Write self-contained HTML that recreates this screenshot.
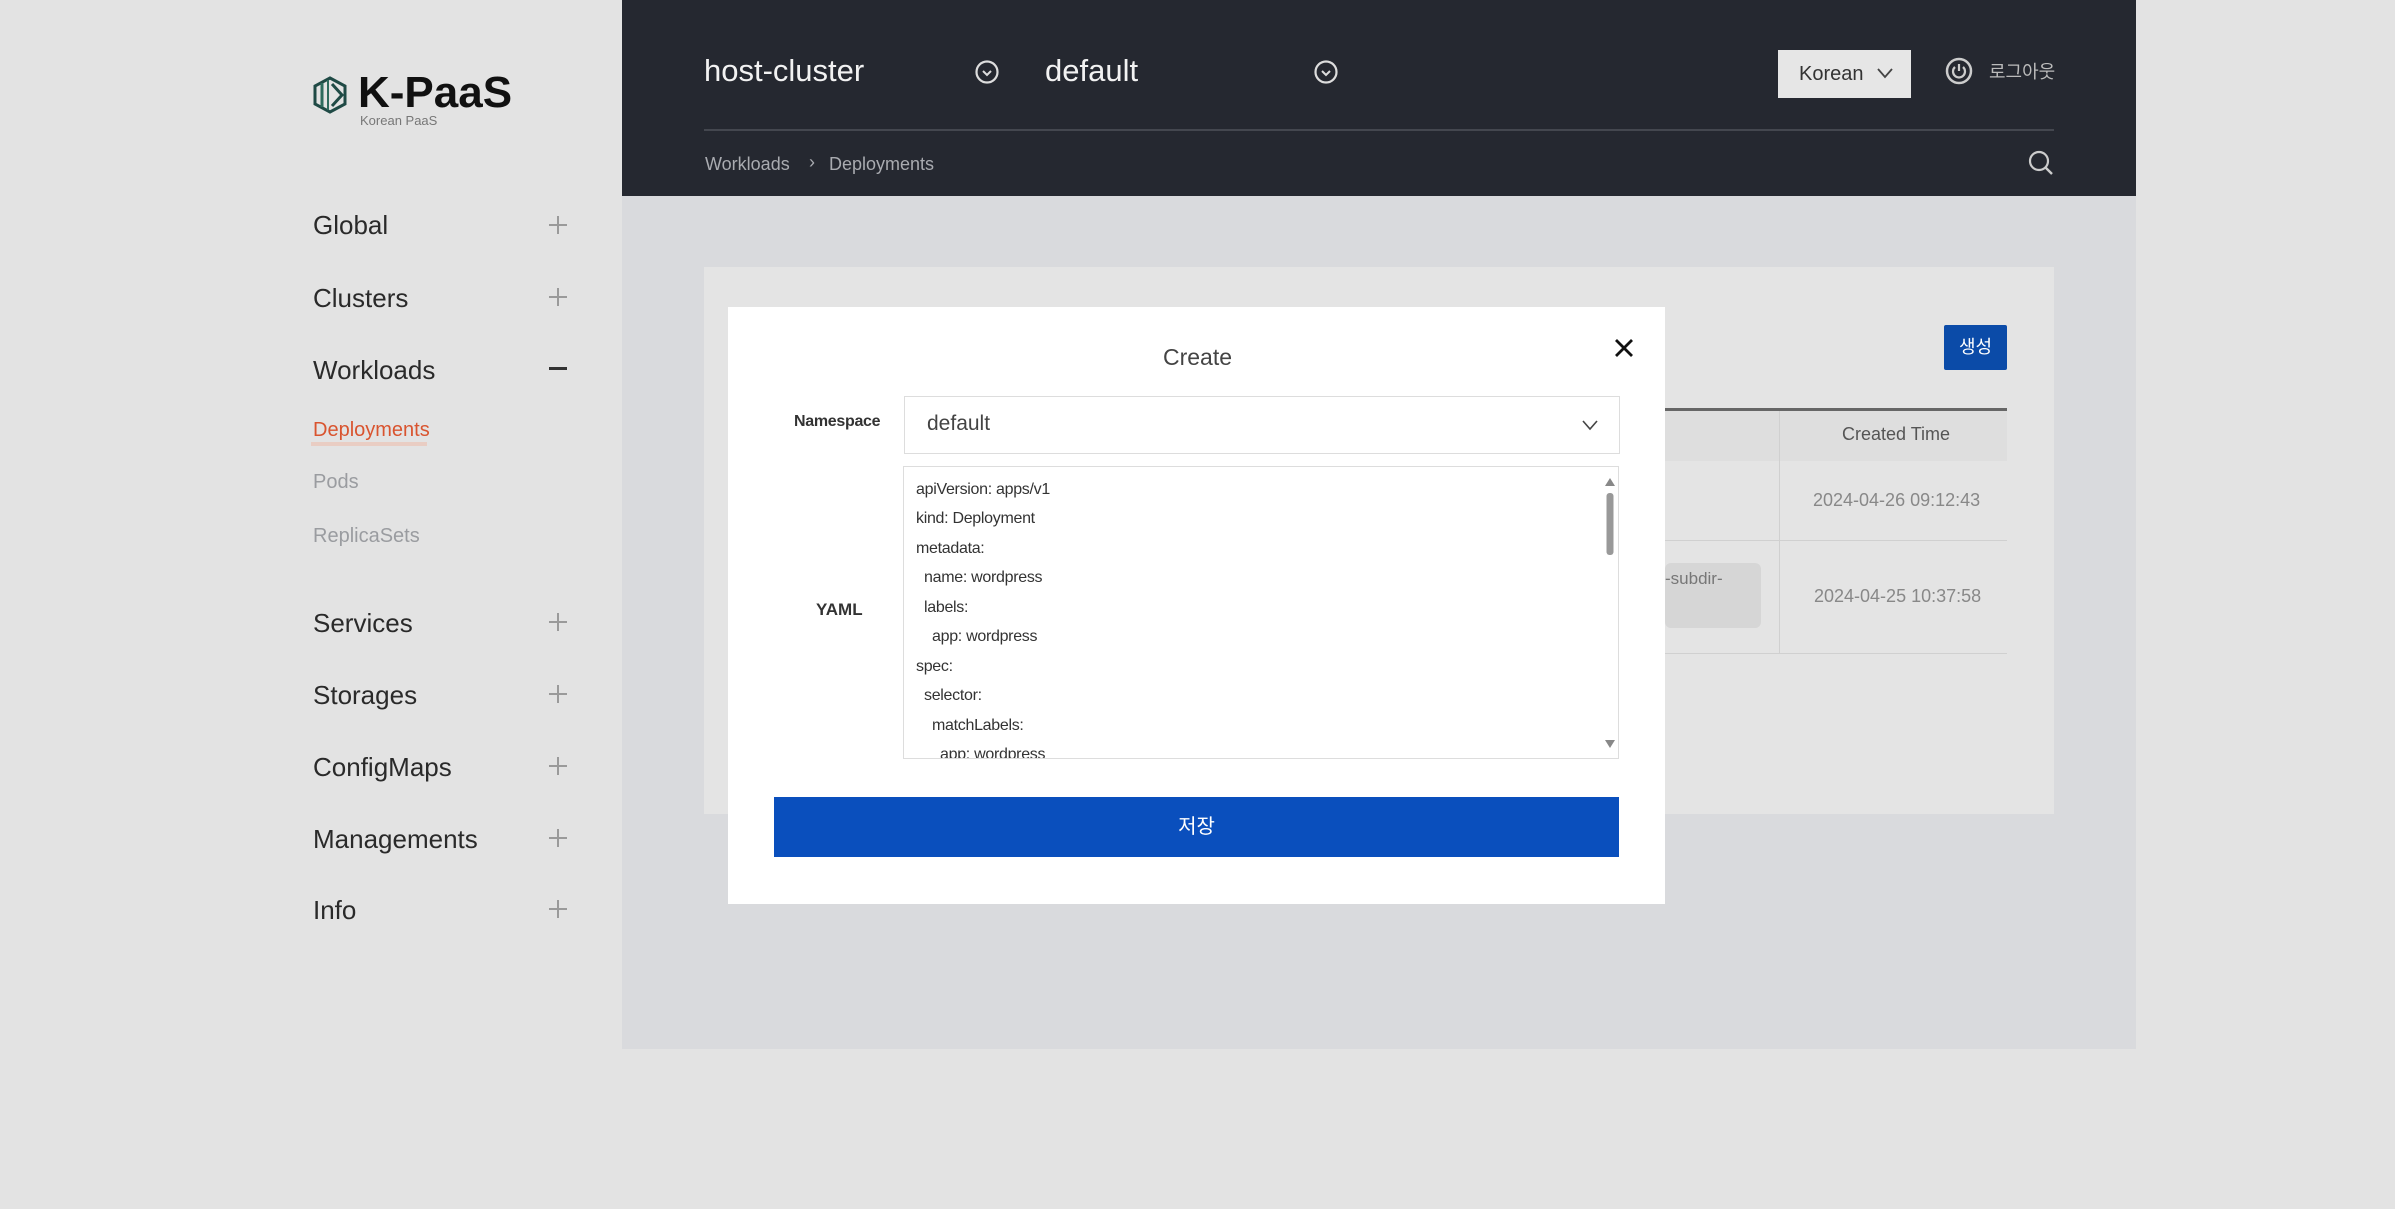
<!DOCTYPE html>
<html><head><meta charset="utf-8"><style>
*{margin:0;padding:0;box-sizing:border-box}
body{width:2395px;height:1209px;background:#e3e3e3;font-family:"Liberation Sans","Noto Sans CJK KR",sans-serif;position:relative;overflow:hidden}
.a{position:absolute;white-space:nowrap}
.nav{font-size:26px;color:#2a2a2a;left:313px}
.plus{left:549px;width:20px;height:20px}
.plus:before,.plus:after{content:"";position:absolute;background:#9a9a9a}
.plus:before{left:0;top:9px;width:18px;height:2px}
.plus:after{left:8px;top:1px;width:2px;height:18px}
.sub{left:313px;font-size:20px;color:#9a9ca0}
.y{position:absolute;left:916px;font-size:16px;color:#333;letter-spacing:-0.3px}
</style></head><body>
<div class="a" style="left:0;top:0;width:622px;height:1209px;background:#e3e3e3"></div>
<svg class="a" style="left:312px;top:76px" width="36" height="38" viewBox="0 0 36 38"><polygon points="18,2 33,10 33,28 18,36 3,28 3,10" fill="none" stroke="#1f4a45" stroke-width="3"/><line x1="10" y1="7" x2="10" y2="31" stroke="#2e6b5e" stroke-width="3"/><line x1="16" y1="4" x2="16" y2="34" stroke="#2e6b5e" stroke-width="2"/><polyline points="20,8 30,19 20,30" fill="none" stroke="#1f4a45" stroke-width="3"/></svg>
<div class="a" style="left:358px;top:68px;font-size:44px;font-weight:bold;color:#111">K-PaaS</div>
<div class="a" style="left:360px;top:113px;font-size:13px;color:#777">Korean PaaS</div>
<div class="a nav" style="top:210px">Global</div><div class="a plus" style="top:215px"></div>
<div class="a nav" style="top:283px">Clusters</div><div class="a plus" style="top:287px"></div>
<div class="a nav" style="top:355px">Workloads</div><div class="a" style="left:549px;top:367px;width:18px;height:3px;background:#333"></div>
<div class="a sub" style="top:419px;color:#d9542f">Deployments</div><div class="a" style="left:311px;top:442px;width:116px;height:4px;background:#e9cdc3"></div>
<div class="a sub" style="top:471px">Pods</div>
<div class="a sub" style="top:525px">ReplicaSets</div>
<div class="a nav" style="top:608px">Services</div><div class="a plus" style="top:612px"></div>
<div class="a nav" style="top:680px">Storages</div><div class="a plus" style="top:684px"></div>
<div class="a nav" style="top:752px">ConfigMaps</div><div class="a plus" style="top:756px"></div>
<div class="a nav" style="top:824px">Managements</div><div class="a plus" style="top:828px"></div>
<div class="a nav" style="top:895px">Info</div><div class="a plus" style="top:899px"></div>
<div class="a" style="left:622px;top:0;width:1514px;height:1049px;background:#d9dadd"></div>
<div class="a" style="left:622px;top:0;width:1514px;height:196px;background:#252830"></div>
<div class="a" style="left:704px;top:53px;font-size:31px;color:#f2f2f2">host-cluster</div>
<svg class="a" style="left:974px;top:59px" width="26" height="26"><circle cx="13" cy="13" r="10.5" fill="none" stroke="#ddd" stroke-width="2.2"/><polyline points="9,12 13,16 17,12" fill="none" stroke="#ddd" stroke-width="2"/></svg>
<div class="a" style="left:1045px;top:53px;font-size:31px;color:#f2f2f2">default</div>
<svg class="a" style="left:1313px;top:59px" width="26" height="26"><circle cx="13" cy="13" r="10.5" fill="none" stroke="#ddd" stroke-width="2.2"/><polyline points="9,12 13,16 17,12" fill="none" stroke="#ddd" stroke-width="2"/></svg>
<div class="a" style="left:1778px;top:50px;width:133px;height:48px;background:#e6e6e6;font-size:20px;color:#333;padding:13px 0 0 21px">Korean</div>
<svg class="a" style="left:1876px;top:66px" width="18" height="14"><polyline points="2,3 9,11 16,3" fill="none" stroke="#444" stroke-width="1.8"/></svg>
<svg class="a" style="left:1944px;top:56px" width="30" height="30"><circle cx="15" cy="15" r="12" fill="none" stroke="#ccc" stroke-width="2.5"/><path d="M11 11 A6 6 0 1 0 19 11" fill="none" stroke="#ccc" stroke-width="2.2"/><line x1="15" y1="8" x2="15" y2="15" stroke="#ccc" stroke-width="2.2"/></svg>
<div class="a" style="left:1989px;top:58px;font-size:18px;color:#bbb">로그아웃</div>
<div class="a" style="left:704px;top:129px;width:1350px;height:2px;background:#44474f"></div>
<div class="a" style="left:705px;top:154px;font-size:18px;color:#a9abb0">Workloads</div>
<div class="a" style="left:809px;top:152px;font-size:18px;color:#a9abb0">›</div>
<div class="a" style="left:829px;top:154px;font-size:18px;color:#a9abb0">Deployments</div>
<svg class="a" style="left:2027px;top:149px" width="28" height="28"><circle cx="12" cy="12" r="9" fill="none" stroke="#ccc" stroke-width="2.2"/><line x1="18.5" y1="18.5" x2="25" y2="25" stroke="#ccc" stroke-width="2.4"/></svg>
<div class="a" style="left:704px;top:267px;width:1350px;height:547px;background:#e4e4e4"></div>
<div class="a" style="left:1944px;top:325px;width:63px;height:45px;background:#0b4ba8;border-radius:2px;color:#fff;font-size:18px;text-align:center;line-height:45px">생성</div>
<div class="a" style="left:1665px;top:408px;width:342px;height:3px;background:#666"></div>
<div class="a" style="left:1665px;top:411px;width:342px;height:50px;background:#dedede"></div>
<div class="a" style="left:1779px;top:411px;width:1px;height:242px;background:#d0d0d0"></div>
<div class="a" style="left:1842px;top:424px;font-size:18px;color:#555">Created Time</div>
<div class="a" style="left:1665px;top:540px;width:342px;height:1px;background:#d0d0d0"></div>
<div class="a" style="left:1665px;top:653px;width:342px;height:1px;background:#d0d0d0"></div>
<div class="a" style="left:1813px;top:490px;font-size:18px;color:#888">2024-04-26 09:12:43</div>
<div class="a" style="left:1814px;top:586px;font-size:18px;color:#888">2024-04-25 10:37:58</div>
<div class="a" style="left:1665px;top:563px;width:96px;height:65px;background:#d6d6d6;border-radius:6px"></div>
<div class="a" style="left:1665px;top:569px;font-size:17px;color:#777">-subdir-</div>
<div class="a" style="left:728px;top:307px;width:937px;height:597px;background:#fff"></div>
<div class="a" style="left:1163px;top:344px;font-size:23px;color:#444">Create</div>
<svg class="a" style="left:1613px;top:337px" width="22" height="22"><path d="M3 3 L19 19 M19 3 L3 19" stroke="#111" stroke-width="2.8"/></svg>
<div class="a" style="left:794px;top:413px;font-size:16px;font-weight:bold;color:#333;letter-spacing:-0.3px">Namespace</div>
<div class="a" style="left:904px;top:396px;width:716px;height:58px;border:1px solid #ddd"></div>
<div class="a" style="left:927px;top:412px;font-size:21px;color:#444">default</div>
<svg class="a" style="left:1581px;top:418px" width="18" height="14"><polyline points="2,3 9,11 16,3" fill="none" stroke="#444" stroke-width="1.6"/></svg>
<div class="a" style="left:816px;top:600px;font-size:17px;font-weight:bold;color:#333">YAML</div>
<div class="a" style="left:903px;top:466px;width:716px;height:293px;border:1px solid #ddd;overflow:hidden">
<div class="y" style="left:12px;top:14px">apiVersion: apps/v1</div>
<div class="y" style="left:12px;top:43px">kind: Deployment</div>
<div class="y" style="left:12px;top:73px">metadata:</div>
<div class="y" style="left:20px;top:102px">name: wordpress</div>
<div class="y" style="left:20px;top:132px">labels:</div>
<div class="y" style="left:28px;top:161px">app: wordpress</div>
<div class="y" style="left:12px;top:191px">spec:</div>
<div class="y" style="left:20px;top:220px">selector:</div>
<div class="y" style="left:28px;top:250px">matchLabels:</div>
<div class="y" style="left:36px;top:279px">app: wordpress</div>
</div>
<svg class="a" style="left:1603px;top:473px" width="14" height="280"><polygon points="2,13 12,13 7,5" fill="#888"/><rect x="3.5" y="20" width="7" height="62" rx="3" fill="#999"/><polygon points="2,267 12,267 7,275" fill="#888"/></svg>
<div class="a" style="left:774px;top:797px;width:845px;height:60px;background:#0a4fbd;color:#fff;font-size:20px;text-align:center;line-height:60px">저장</div>
</body></html>
